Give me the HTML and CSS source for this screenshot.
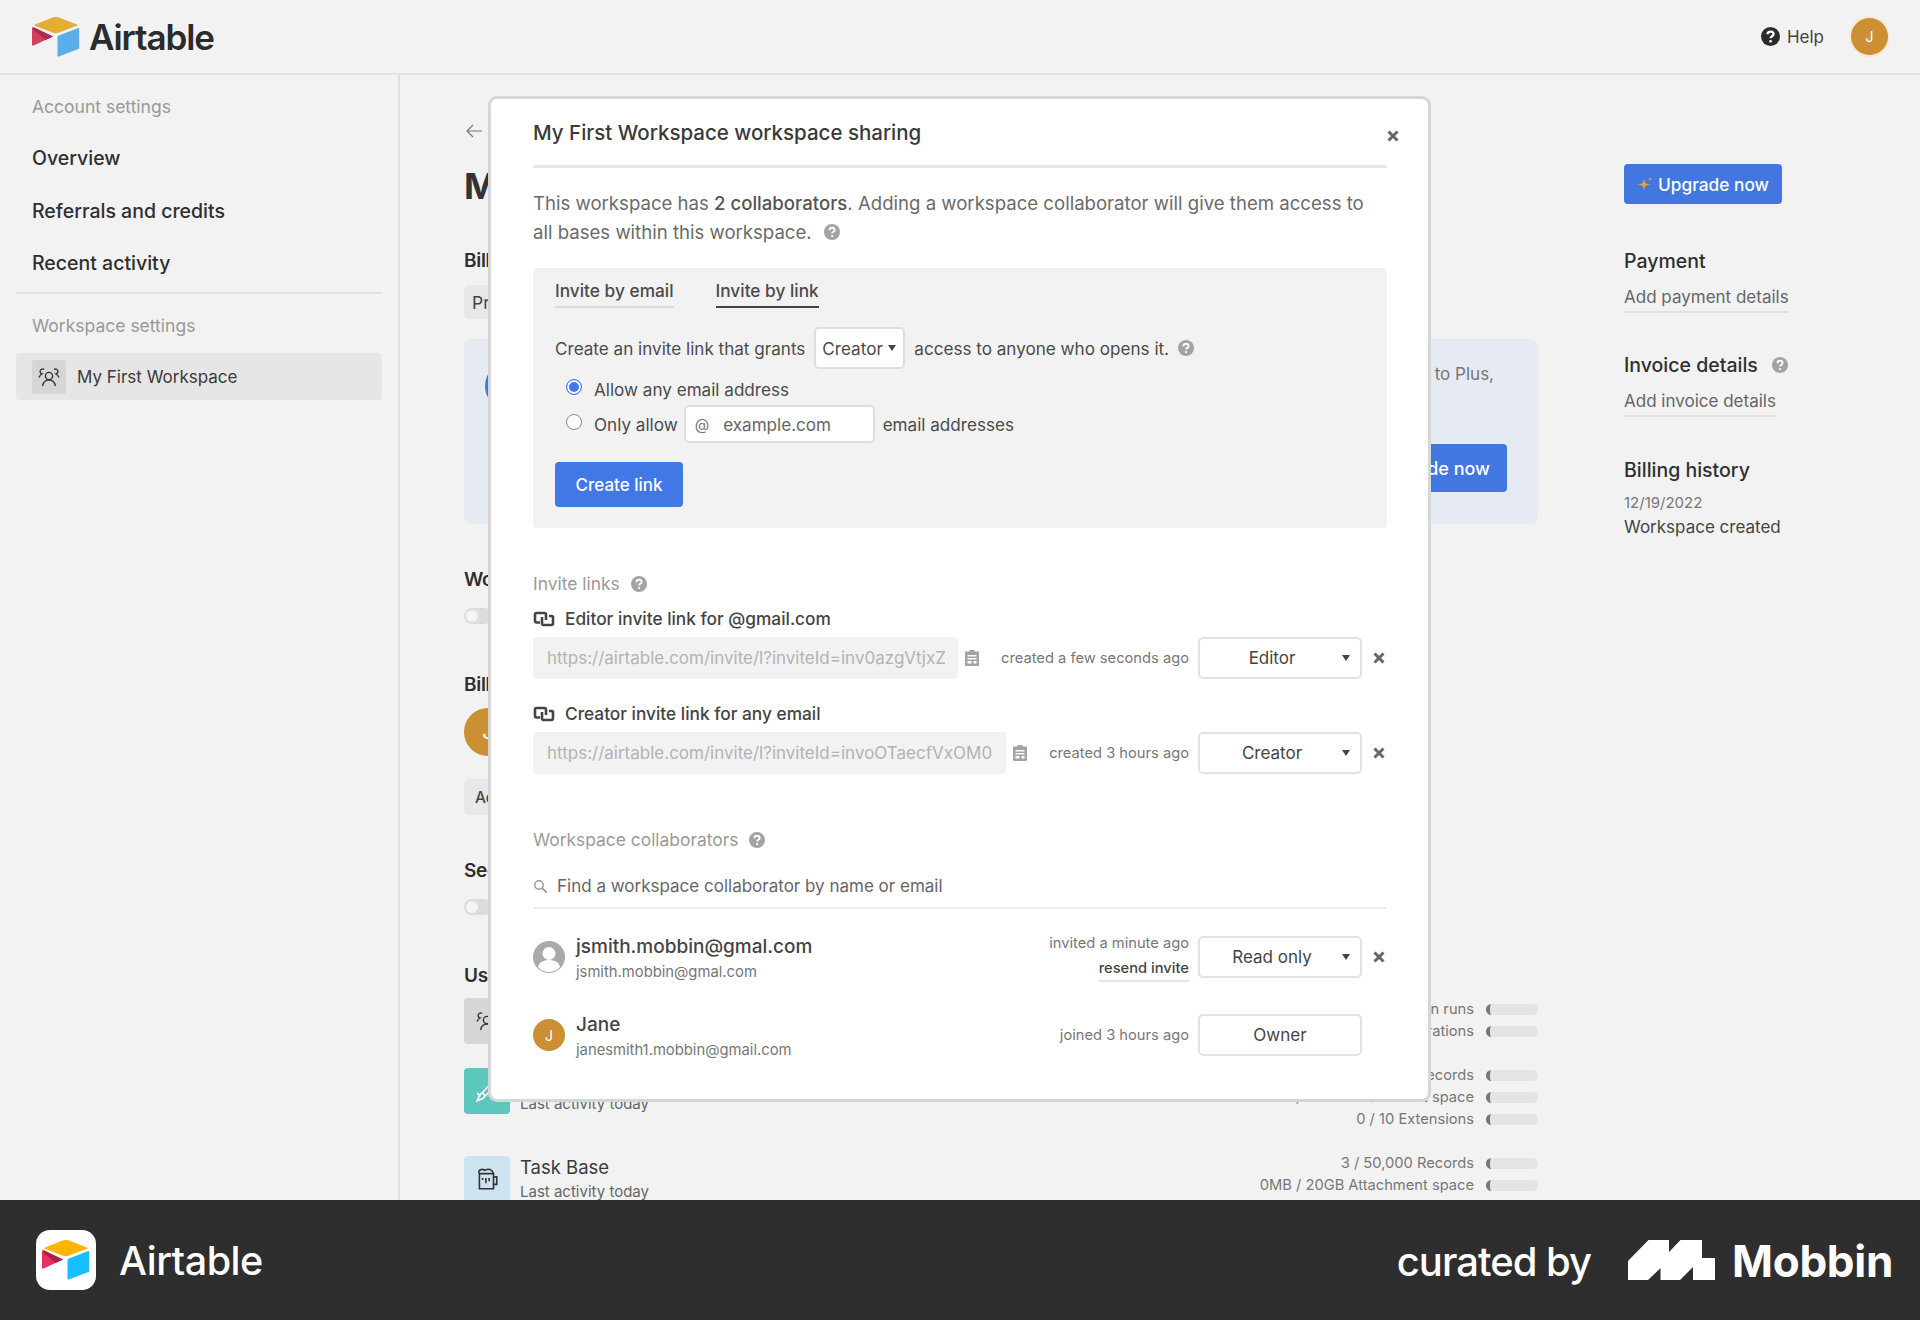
FILE: index.html
```html
<!DOCTYPE html>
<html lang="en">
<head>
    <meta charset="UTF-8">
    <meta name="viewport" content="width=device-width, initial-scale=1.0">
    <title>My First Workspace workspace sharing</title>
    <link rel="stylesheet" href="styles.css">
</head>
<body>

<!-- icons used more than once -->
<svg class="sprite" width="0" height="0">
    <symbol id="i-help" viewBox="0 0 16 16">
        <circle cx="8" cy="8" r="8" fill="currentColor"/>
        <path d="M5.500 6.200c0-1.500 1.100-2.400 2.600-2.400s2.500.9 2.500 2.100c0 1.900-2.500 1.900-2.500 3.600" fill="none" stroke="#fff" stroke-width="1.900"/>
        <circle cx="8.100" cy="12.100" r="1.150" fill="#fff"/>
    </symbol>
    <symbol id="i-x" viewBox="0 0 12 12">
        <path d="M1.500 1.500l9 9M10.500 1.500l-9 9" fill="none" stroke="currentColor" stroke-width="3"/>
    </symbol>
    <symbol id="i-link" viewBox="0 0 22 16">
        <path d="M7 11.500H3.500A1.500 1.500 0 0 1 2 10V3.500A1.500 1.500 0 0 1 3.500 2H11.500A1.500 1.500 0 0 1 13 3.500V9" fill="none" stroke="currentColor" stroke-width="2.600"/>
        <path d="M16 5h2.500A1.500 1.500 0 0 1 20 6.500V12.500A1.500 1.500 0 0 1 18.500 14H10.500A1.500 1.500 0 0 1 9 12.500V6" fill="none" stroke="currentColor" stroke-width="2.600"/>
    </symbol>
    <symbol id="i-clip" viewBox="0 0 14 16">
        <path fill="currentColor" fill-rule="evenodd" d="M4.500 0h5v1.500H13a1 1 0 0 1 1 1V15a1 1 0 0 1-1 1H1a1 1 0 0 1-1-1V2.500a1 1 0 0 1 1-1h3.500zM2.500 5v1.600h9V5zM2.500 8v1.600h9V8zM2.500 11v2.500h4V11zM8.500 11v2.500h3V11z"/>
    </symbol>
    <symbol id="i-people" viewBox="0 0 24 24">
        <g fill="none" stroke="currentColor" stroke-width="1.400">
            <circle cx="12" cy="11" r="3.600"/>
            <path d="M5.500 21c.8-3.500 3.400-6 6.500-6s5.700 2.500 6.500 6"/>
            <path d="M7 4.500a2.500 2.500 0 1 0-2 4.500c-1.500.8-2.500 2-3 3.500"/>
            <path d="M17 4.500a2.500 2.500 0 1 1 2 4.500c1.500.8 2.500 2 3 3.500"/>
        </g>
    </symbol>
    <symbol id="i-logo" viewBox="0 0 48 40">
        <path class="logo-top" d="M20.600.5 3 7.500c-.8.400-.8 1 0 1.300L21 15.800c1.700.6 3.700.6 5.400 0L45 8.800c.8-.3.800-.9 0-1.300L27 .5c-2-.7-4.400-.7-6.400 0z"/>
        <path class="logo-right" d="M25.500 20v18.600c0 .8.700 1.300 1.400 1L46.400 32c.5-.2.800-.7.800-1.200V12.200c0-.8-.8-1.300-1.500-1L26.300 18.800c-.5.200-.8.700-.8 1.200z"/>
        <path class="logo-left" d="M0 11.300V27.600c0 .8.800 1.300 1.500 1L21 19.500 1.500 10.300C.8 10 0 10.500 0 11.300z"/>
        <path class="logo-fold" d="M1.500 10.300 21 19.500l-7.500 3.500L1 12.500z"/>
    </symbol>
</svg>

<header class="topbar">
    <a class="brand">
        <svg class="brand-mark" width="48" height="40"><use href="#i-logo"/></svg>
        <span class="brand-name">Airtable</span>
    </a>
    <div class="topbar-right">
        <svg class="help-icon" width="19" height="19"><use href="#i-help"/></svg>
        <span class="help-label">Help</span>
        <span class="avatar avatar-top">J</span>
    </div>
</header>

<div class="app">
    <nav class="sidebar">
        <div class="side-heading">Account settings</div>
        <a class="side-link">Overview</a>
        <a class="side-link">Referrals and credits</a>
        <a class="side-link">Recent activity</a>
        <div class="side-rule"></div>
        <div class="side-heading">Workspace settings</div>
        <a class="side-item">
            <span class="side-icon"><svg width="24" height="24"><use href="#i-people"/></svg></span>
            My First Workspace
        </a>
    </nav>

    <main class="main">
        <div class="center">
            <svg class="back" width="20" height="20" viewBox="0 0 20 20">
                <path d="M18 10H3M9 4l-6 6 6 6" fill="none" stroke="#777" stroke-width="1.200"/>
            </svg>
            <h1 class="page-title">My First Workspace</h1>

            <h2 class="block-title title-billing">Billing plan</h2>
            <div class="chip chip-plan">Pricing plan</div>
            <div class="plan-panel">
                <span class="plan-dot"></span>
                <div class="plan-body">
                    <p class="plan-text">Get more records, more views and more space by upgrading to Plus,</p>
                    <button class="btn btn-upgrade">Upgrade now</button>
                </div>
            </div>

            <h2 class="block-title title-gap">Workspace sharing</h2>
            <div class="toggle"></div>

            <h2 class="block-title title-bill">Billable collaborators</h2>
            <span class="avatar avatar-big">J</span>
            <div class="chip chip-add">Add collaborator</div>

            <h2 class="block-title title-sec">Security</h2>
            <div class="toggle"></div>

            <h2 class="block-title title-bill">Usage</h2>
            <div class="usage">
                <div class="usage-row usage-row-first">
                    <span class="usage-icon icon-grey"><svg width="24" height="24"><use href="#i-people"/></svg></span>
                    <div class="usage-name"><div class="usage-title">All bases</div></div>
                    <div class="usage-stats stats-short">
                        <div class="stat">0 / 100 Automation runs<span class="bar"></span></div>
                        <div class="stat">0 / 100 Sync integrations<span class="bar"></span></div>
                    </div>
                </div>
                <div class="usage-row">
                    <span class="usage-icon icon-teal">
                        <svg width="26" height="26" viewBox="0 0 24 24"><path d="M3 21l5-2 12-12-3-3L5 16zM8 14l3 3M3 14l3 3" fill="none" stroke="#fff" stroke-width="1.500"/></svg>
                    </span>
                    <div class="usage-name">
                        <div class="usage-title">Untitled Base</div>
                        <div class="usage-sub">Last activity today</div>
                    </div>
                    <div class="usage-stats">
                        <div class="stat">3 / 50,000 Records<span class="bar"></span></div>
                        <div class="stat">0MB / 20GB Attachment space<span class="bar"></span></div>
                        <div class="stat">0 / 10 Extensions<span class="bar"></span></div>
                    </div>
                </div>
                <div class="usage-row">
                    <span class="usage-icon icon-blue">
                        <svg width="26" height="26" viewBox="0 0 24 24"><path d="M5 7h13v14H5zM18 10h3v7h-3M5 7c-2-3 2-5 5-3 3-2 7-1 8 3M8 11v2M11 11v5M14 11v3" fill="none" stroke="#333" stroke-width="1.500"/></svg>
                    </span>
                    <div class="usage-name">
                        <div class="usage-title">Task Base</div>
                        <div class="usage-sub">Last activity today</div>
                    </div>
                    <div class="usage-stats">
                        <div class="stat">3 / 50,000 Records<span class="bar"></span></div>
                        <div class="stat">0MB / 20GB Attachment space<span class="bar"></span></div>
                    </div>
                </div>
            </div>
        </div>

        <aside class="details">
            <button class="btn btn-side">
                <svg width="16" height="16" viewBox="0 0 16 16"><path fill="#e6a63a" d="M7 3l1.300 4.200L13 8.500l-4.700 1.300L7 14l-1.300-4.200L1 8.500l4.700-1.300zM13 1l.5 1.500L15 3l-1.500.5L13 5l-.5-1.500L11 3l1.500-.5z"/></svg>
                Upgrade now
            </button>
            <h3 class="details-title details-payment">Payment</h3>
            <a class="details-link">Add payment details</a>
            <h3 class="details-title details-invoice">Invoice details
                <svg class="qmark" width="16" height="16"><use href="#i-help"/></svg>
            </h3>
            <a class="details-link">Add invoice details</a>
            <h3 class="details-title details-history">Billing history</h3>
            <div class="history-date">12/19/2022</div>
            <div class="history-text">Workspace created</div>
        </aside>
    </main>
</div>

<div class="modal">
    <svg class="modal-close" width="12" height="12"><use href="#i-x"/></svg>
    <h2 class="modal-title">My First Workspace workspace sharing</h2>
    <p class="modal-intro">This workspace has <strong>2 collaborators</strong>. Adding a workspace collaborator will give them access to all bases within this workspace.
        <svg class="qmark qmark-intro" width="16" height="16"><use href="#i-help"/></svg>
    </p>

    <section class="invite-box">
        <div class="tabs">
            <a class="tab">Invite by email</a>
            <a class="tab tab-active">Invite by link</a>
        </div>
        <div class="grant-row">
            <span>Create an invite link that grants</span>
            <span class="mini-select">Creator<i class="caret"></i></span>
            <span>access to anyone who opens it.</span>
            <svg class="qmark" width="16" height="16"><use href="#i-help"/></svg>
        </div>
        <label class="radio-row radio-first"><span class="radio radio-on"></span>Allow any email address</label>
        <label class="radio-row radio-second">
            <span class="radio"></span>Only allow
            <span class="domain-input"><span class="at">@</span><span class="domain-ph">example.com</span></span>
            <span class="domain-after">email addresses</span>
        </label>
        <button class="btn btn-create">Create link</button>
    </section>

    <div class="section-label label-links">Invite links
        <svg class="qmark" width="16" height="16"><use href="#i-help"/></svg>
    </div>

    <div class="link-title link-title-first"><svg width="22" height="16"><use href="#i-link"/></svg>Editor invite link for @gmail.com</div>
    <div class="link-row">
        <div class="url-box url-editor">https://airtable.com/invite/l?inviteId=inv0azgVtjxZ</div>
        <svg class="clip" width="14" height="16"><use href="#i-clip"/></svg>
        <span class="link-time">created a few seconds ago</span>
        <span class="role-select">Editor<i class="caret"></i></span>
        <svg class="row-x" width="12" height="12"><use href="#i-x"/></svg>
    </div>

    <div class="link-title"><svg width="22" height="16"><use href="#i-link"/></svg>Creator invite link for any email</div>
    <div class="link-row">
        <div class="url-box url-creator">https://airtable.com/invite/l?inviteId=invoOTaecfVxOM0u9f2</div>
        <svg class="clip" width="14" height="16"><use href="#i-clip"/></svg>
        <span class="link-time">created 3 hours ago</span>
        <span class="role-select">Creator<i class="caret"></i></span>
        <svg class="row-x" width="12" height="12"><use href="#i-x"/></svg>
    </div>

    <div class="section-label label-collab">Workspace collaborators
        <svg class="qmark" width="16" height="16"><use href="#i-help"/></svg>
    </div>
    <div class="search-row">
        <svg width="15" height="15" viewBox="0 0 15 15"><circle cx="6" cy="6" r="4.200" fill="none" stroke="#999" stroke-width="1.500"/><path d="M9.200 9.200l4.300 4.300" stroke="#999" stroke-width="1.800"/></svg>
        <span>Find a workspace collaborator by name or email</span>
    </div>

    <div class="person person-first">
        <svg class="person-avatar" width="32" height="32" viewBox="0 0 32 32">
            <circle cx="16" cy="16" r="16" fill="#a9a9a9"/>
            <circle cx="16" cy="12.500" r="6.500" fill="#fff"/>
            <path d="M5 26c1-5 5.500-7 11-7s10 2 11 7c-3 3.500-7 5-11 5s-8-1.500-11-5z" fill="#fff"/>
        </svg>
        <div class="person-info">
            <div class="person-name">jsmith.mobbin@gmal.com</div>
            <div class="person-mail">jsmith.mobbin@gmal.com</div>
        </div>
        <div class="person-meta">
            <div>invited a minute ago</div>
            <a class="resend">resend invite</a>
        </div>
        <span class="role-select">Read only<i class="caret"></i></span>
        <svg class="row-x" width="12" height="12"><use href="#i-x"/></svg>
    </div>
    <div class="person person-second">
        <span class="avatar avatar-person">J</span>
        <div class="person-info">
            <div class="person-name">Jane</div>
            <div class="person-mail">janesmith1.mobbin@gmail.com</div>
        </div>
        <div class="person-meta">joined 3 hours ago</div>
        <span class="role-select role-owner">Owner</span>
    </div>
</div>

<footer class="credit">
    <div class="credit-left">
        <span class="credit-tile"><svg width="48" height="40"><use href="#i-logo"/></svg></span>
        <span class="credit-name">Airtable</span>
    </div>
    <div class="credit-right">
        <span class="credit-by">curated by</span>
        <svg class="mobbin-mark" width="87" height="40" viewBox="0 0 87 40">
            <path fill="#fff" d="M0 40V21L20.500 0H41V20L20 40zM32.500 40V21L52.500 0H74V18H87V40H65V27L52 40z"/>
        </svg>
        <span class="credit-mobbin">Mobbin</span>
    </div>
</footer>

</body>
</html>
```

FILE: styles.css
```css
* {
    box-sizing: border-box;
}
html, body {
    margin: 0;
    height: 1320px;
    overflow: hidden;
}
body {
    display: flex;
    flex-direction: column;
    background-color: #f2f2f2;
    color: #333;
    font-family: Inter, "Liberation Sans", sans-serif;
    position: relative;
    --logo-top: #e6ad34;
    --logo-right: #5aaeea;
    --logo-left: #d63d63;
    --logo-fold: #a82c50;
}
h1, h2, h3, p {
    margin: 0;
}
.sprite {
    position: absolute;
}
button {
    font-family: inherit;
    border: 0;
}
.logo-top { fill: var(--logo-top); }
.logo-right { fill: var(--logo-right); }
.logo-left { fill: var(--logo-left); }
.logo-fold { fill: var(--logo-fold); }

/* top bar */
.topbar {
    height: 75px;
    flex: none;
    display: flex;
    align-items: center;
    justify-content: space-between;
    border-bottom: 2px solid #e4e4e4;
    padding: 0 32px 0 32px;
}
.brand {
    display: flex;
    align-items: center;
    gap: 9px;
}
.brand-name {
    font-size: 35px;
    font-weight: 600;
    letter-spacing: -1.100px;
    color: #2b2b2b;
}
.topbar-right {
    display: flex;
    align-items: center;
}
.help-icon {
    color: #2b2b2b;
}
.help-label {
    font-size: 17px;
    color: #444;
    margin-left: 7px;
    margin-right: 27px;
}
.avatar {
    display: flex;
    align-items: center;
    justify-content: center;
    border-radius: 50%;
    background-color: #cc8f33;
    color: #fff;
}
.avatar-top {
    width: 37px;
    height: 37px;
    font-size: 14px;
    box-shadow: 0 0 0 2px #f6e9d4;
}

/* left nav */
.app {
    flex: 1;
    display: flex;
    min-height: 0;
}
.sidebar {
    width: 400px;
    flex: none;
    border-right: 2px solid #e0e0e0;
    padding: 21px 16px 0;
}
.side-heading {
    font-size: 17.500px;
    line-height: 22px;
    color: #999;
    padding-left: 16px;
}
.side-link {
    display: block;
    font-size: 19.500px;
    font-weight: 500;
    line-height: 26px;
    color: #2f2f2f;
    padding-left: 16px;
    margin-top: 26.500px;
}
.side-link:first-of-type {
    margin-top: 27px;
}
.side-rule {
    height: 2px;
    background-color: #e2e2e2;
    margin-top: 16px;
    margin-bottom: 21px;
}
.side-item {
    display: flex;
    align-items: center;
    height: 47px;
    margin-top: 16px;
    padding-left: 16px;
    gap: 11px;
    background-color: #e6e6e6;
    border-radius: 4px;
    font-size: 17px;
    color: #3a3a3a;
}
.side-icon {
    width: 34px;
    height: 34px;
    border-radius: 3px;
    background-color: #d6d6d6;
    display: flex;
    align-items: center;
    justify-content: center;
    color: #333;
}

/* page behind the dialog */
.main {
    flex: 1;
    display: flex;
    gap: 86px;
    padding-left: 64px;
    min-width: 0;
    overflow: hidden;
}
.center {
    width: 1074px;
    flex: none;
}
.back {
    display: block;
    margin-top: 46px;
}
.page-title {
    font-size: 36px;
    font-weight: 700;
    line-height: 44px;
    margin-top: 23px;
    color: #333;
}
.block-title {
    font-size: 19px;
    font-weight: 600;
    line-height: 24px;
    letter-spacing: -0.300px;
    color: #2f2f2f;
}
.title-billing {
    margin-top: 41px;
}
.title-gap {
    margin-top: 44px;
}
.title-bill {
    margin-top: 49px;
}
.title-sec {
    margin-top: 44px;
}
.chip {
    width: 220px;
    border-radius: 5px;
    background-color: #e8e8e8;
    font-size: 17.500px;
    color: #444;
    padding-left: 8px;
    display: flex;
    align-items: center;
}
.chip-plan {
    height: 34px;
    margin-top: 12px;
}
.chip-add {
    height: 36px;
    margin-top: 23px;
    padding-left: 11px;
    font-size: 15.500px;
    font-weight: 500;
}
.plan-panel {
    height: 185px;
    margin-top: 20px;
    border-radius: 8px;
    background-color: #e6eaf3;
    display: flex;
    padding: 22px 31px 32px 21px;
}
.plan-dot {
    width: 50px;
    height: 50px;
    flex: none;
    border-radius: 50%;
    background-color: #4277e0;
}
.plan-body {
    flex: 1;
    display: flex;
    flex-direction: column;
    justify-content: space-between;
    align-items: flex-end;
}
.plan-text {
    font-size: 17px;
    line-height: 26px;
    color: #777;
    margin-right: 13px;
}
.btn {
    color: #fff;
    background-color: #4277e0;
    border-radius: 4px;
    font-weight: 500;
}
.btn-upgrade {
    height: 48px;
    padding: 0 17px;
    font-size: 18px;
}
.toggle {
    width: 28px;
    height: 16px;
    margin-top: 16px;
    border-radius: 8px;
    background-color: #dcdcdc;
    padding: 2px;
}
.toggle::before {
    content: "";
    display: block;
    width: 12px;
    height: 12px;
    border-radius: 50%;
    background-color: #f4f4f4;
}
.avatar-big {
    width: 48px;
    height: 48px;
    margin-top: 11px;
    font-size: 20px;
}
.usage {
    margin-top: 6px;
    display: flex;
    flex-direction: column;
    gap: 22px;
}
.usage-row {
    display: flex;
    align-items: flex-start;
}
.usage-row-first {
    margin-bottom: -2px;
}
.usage-icon {
    width: 46px;
    height: 46px;
    margin-top: 4px;
    border-radius: 4px;
    flex: none;
    display: flex;
    align-items: center;
    justify-content: center;
}
.icon-grey {
    background-color: #d6d6d6;
}
.icon-teal {
    background-color: #5cc7bd;
}
.icon-blue {
    background-color: #cde4f0;
}
.usage-name {
    flex: 1;
    margin-left: 10px;
}
.usage-title {
    font-size: 18.500px;
    line-height: 30px;
    color: #3a3a3a;
}
.usage-sub {
    font-size: 15px;
    line-height: 20px;
    color: #666;
}
.stats-short {
    margin-top: 4px;
}
.stat {
    display: flex;
    align-items: center;
    justify-content: flex-end;
    font-size: 14.700px;
    line-height: 22px;
    color: #777;
}
.bar {
    width: 52px;
    height: 11px;
    margin-left: 12px;
    border-radius: 6px;
    background-color: #e4e4e4;
    border-left: 4px solid #777;
}

/* right column */
.details {
    flex: 1;
}
.btn-side {
    display: flex;
    align-items: center;
    gap: 5px;
    width: 158px;
    height: 40px;
    margin-top: 89px;
    padding-left: 13px;
    font-size: 17.300px;
}
.details-title {
    font-size: 19.500px;
    font-weight: 500;
    line-height: 24px;
    color: #2f2f2f;
    display: flex;
    align-items: center;
}
.details-payment {
    margin-top: 45px;
}
.details-invoice {
    margin-top: 40px;
}
.details-history {
    margin-top: 41px;
}
.details-invoice .qmark {
    margin-left: 14px;
}
.details-link {
    display: inline-block;
    font-size: 17px;
    line-height: 22px;
    margin-top: 13px;
    padding-bottom: 3px;
    color: #666;
    border-bottom: 2px solid #e2e2e2;
}
.history-date {
    font-size: 15px;
    line-height: 20px;
    margin-top: 11px;
    color: #777;
}
.history-text {
    font-size: 17px;
    line-height: 22px;
    margin-top: 3px;
    color: #444;
}
.qmark {
    color: #a3a3a3;
    flex: none;
}

/* sharing dialog */
.modal {
    position: absolute;
    left: 488px;
    top: 96px;
    width: 943px;
    height: 1006px;
    background-color: #fff;
    border: 3px solid #d6d6d6;
    border-radius: 9px;
    padding: 20px 41px 0 42px;
}
.modal-close {
    position: absolute;
    right: 29px;
    top: 31px;
    color: #666;
}
.modal-title {
    font-size: 20.500px;
    font-weight: 500;
    line-height: 28px;
    color: #3a3a3a;
    padding-bottom: 18px;
    border-bottom: 3px solid #e6e6e6;
}
.modal-intro {
    font-size: 18.600px;
    line-height: 29px;
    margin-top: 21px;
    color: #6b6b6b;
}
.modal-intro strong {
    font-weight: 500;
    color: #555;
}
.qmark-intro {
    margin-left: 7px;
    vertical-align: -1px;
}
.invite-box {
    margin-top: 21px;
    height: 260px;
    padding: 12px 22px 0;
    background-color: #f2f2f2;
    border-radius: 4px;
    font-size: 17.100px;
    color: #4a4a4a;
}
.tabs {
    display: flex;
    gap: 42px;
}
.tab {
    line-height: 22px;
    padding-bottom: 4px;
    font-size: 17.300px;
    font-weight: 500;
    border-bottom: 2px solid #dcdcdc;
}
.tab-active {
    border-bottom-color: #444;
}
.grant-row {
    display: flex;
    align-items: center;
    margin-top: 19px;
    height: 42px;
}
.mini-select {
    display: flex;
    align-items: center;
    justify-content: space-between;
    width: 91px;
    height: 42px;
    margin: 0 9px;
    padding: 0 7px 0 6px;
    background-color: #fff;
    border: 2px solid #dedede;
    border-radius: 5px;
}
.grant-row .qmark {
    margin-left: 9px;
}
.caret {
    width: 0;
    height: 0;
    border-left: 4px solid transparent;
    border-right: 4px solid transparent;
    border-top: 6px solid #444;
}
.radio-row {
    display: flex;
    align-items: center;
    padding-left: 11px;
}
.radio-first {
    height: 22px;
    margin-top: 9px;
}
.radio-second {
    height: 38px;
    margin-top: 5px;
}
.radio {
    width: 16px;
    height: 16px;
    margin-right: 12px;
    border: 1px solid #888;
    border-radius: 50%;
    background-color: #fff;
    position: relative;
    top: -2px;
}
.radio-on {
    border-color: #4277e6;
    background-color: #4277e6;
    box-shadow: inset 0 0 0 2px #fff;
}
.domain-input {
    display: flex;
    align-items: center;
    width: 191px;
    height: 38px;
    margin: 0 9px 0 6px;
    padding-left: 9px;
    background-color: #fff;
    border: 2px solid #dedede;
    border-radius: 5px;
}
.at {
    color: #777;
    font-size: 15px;
    margin-right: 14px;
}
.domain-ph {
    color: #666;
}
.domain-after {
    margin-left: -1px;
}
.btn-create {
    display: block;
    width: 128px;
    height: 45px;
    margin-top: 19px;
    font-size: 17px;
    background-color: #4277e6;
}
.section-label {
    display: flex;
    align-items: center;
    gap: 11px;
    font-size: 17.400px;
    line-height: 22px;
    color: #9a9a9a;
}
.label-links {
    margin-top: 45px;
}
.label-collab {
    margin-top: 55px;
}
.link-title {
    display: flex;
    align-items: center;
    gap: 10px;
    font-size: 17.300px;
    font-weight: 500;
    line-height: 22px;
    margin-top: 24px;
    color: #444;
}
.link-title-first {
    margin-top: 13px;
}
.link-row {
    display: flex;
    align-items: center;
    height: 42px;
    margin-top: 7px;
}
.url-box {
    height: 42px;
    line-height: 42px;
    padding-left: 14px;
    background-color: #f2f2f2;
    border-right: 13px solid #f2f2f2;
    border-radius: 4px;
    font-size: 17px;
    color: #b3b3b3;
    white-space: nowrap;
    overflow: hidden;
}
.url-editor {
    width: 425px;
}
.url-creator {
    width: 473px;
}
.clip {
    margin-left: 7px;
    color: #a3a3a3;
    flex: none;
}
.link-time {
    flex: 1;
    text-align: right;
    font-size: 14.700px;
    color: #777;
    margin-right: 9px;
}
.role-select {
    position: relative;
    display: flex;
    align-items: center;
    justify-content: center;
    flex: none;
    width: 164px;
    height: 42px;
    padding-right: 16px;
    font-size: 17px;
    color: #444;
    background-color: #fff;
    border: 2px solid #e2e2e2;
    border-radius: 5px;
}
.role-select .caret {
    position: absolute;
    right: 10px;
    top: 16px;
}
.role-owner {
    padding-right: 0;
    margin-right: 25px;
}
.row-x {
    margin-left: 11px;
    margin-right: 2px;
    color: #666;
    flex: none;
}
.search-row {
    display: flex;
    align-items: center;
    gap: 9px;
    margin-top: 24px;
    padding-bottom: 10px;
    font-size: 17px;
    line-height: 22px;
    color: #666;
    border-bottom: 2px solid #ececec;
}
.person {
    display: flex;
    align-items: center;
    height: 42px;
}
.person-first {
    margin-top: 27px;
}
.person-second {
    margin-top: 36px;
}
.person-avatar {
    flex: none;
}
.avatar-person {
    width: 32px;
    height: 32px;
    flex: none;
    font-size: 14px;
}
.person-info {
    flex: 1;
    margin-left: 11px;
    margin-top: 3px;
}
.person-name {
    font-size: 19px;
    font-weight: 500;
    line-height: 24px;
    color: #444;
}
.person-mail {
    font-size: 14.800px;
    line-height: 20px;
    margin-top: 3px;
    color: #777;
}
.person-meta {
    text-align: right;
    font-size: 14.700px;
    line-height: 20px;
    color: #777;
    margin-right: 9px;
}
.resend {
    display: inline-block;
    margin-top: 5px;
    padding-bottom: 2px;
    font-weight: 500;
    color: #444;
    border-bottom: 2px solid #e4e4e4;
}

/* credit strip */
.credit {
    height: 120px;
    flex: none;
    background-color: #2e2e2e;
    color: #fff;
    display: flex;
    align-items: center;
    justify-content: space-between;
    padding: 0 27px 0 36px;
}
.credit-left, .credit-right {
    display: flex;
    align-items: center;
}
.credit-tile {
    width: 60px;
    height: 60px;
    border-radius: 14px;
    background-color: #fff;
    display: flex;
    align-items: center;
    justify-content: center;
    --logo-top: #ffb400;
    --logo-right: #18bfff;
    --logo-left: #e8305f;
    --logo-fold: #b01e45;
}
.credit-name {
    font-size: 39.500px;
    font-weight: 500;
    margin-left: 23px;
    letter-spacing: -0.500px;
    padding-top: 2px;
}
.credit-by {
    font-size: 40px;
    font-weight: 500;
    letter-spacing: -1px;
    margin-right: 37px;
    padding-top: 2px;
}
.credit-mobbin {
    font-size: 44px;
    font-weight: 700;
    letter-spacing: -0.300px;
    margin-left: 17px;
    padding-top: 2px;
}
```
